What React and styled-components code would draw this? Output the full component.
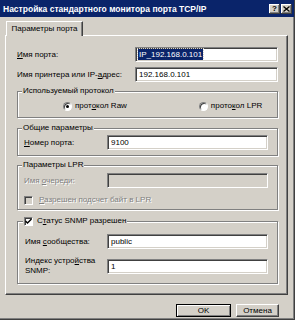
import styled, { createGlobalStyle } from "styled-components";

const GlobalStyle = createGlobalStyle`
  html, body {
    margin: 0;
    padding: 0;
    background: #d4d0c8;
  }
  body {
    font-family: "Liberation Sans", Arial, sans-serif;
    font-size: 8px;
    color: #000;
  }
`;

const Window = styled.div`
  width: 295px;
  height: 320px;
  box-sizing: border-box;
  background: #d4d0c8;
  border-right: 1px solid #404040;
  border-bottom: 1px solid #404040;
  box-shadow: inset -1px -1px 0 #808080;
  display: flex;
  flex-direction: column;
  overflow: hidden;
`;

const TitleBar = styled.div`
  height: 17px;
  flex: none;
  background: #0a246a;
  color: #fff;
  display: flex;
  align-items: center;
  padding: 0 2px 0 3px;
  font-weight: bold;
  font-size: 8.5px;
`;

const Title = styled.span`
  flex: 1;
  white-space: nowrap;
`;

const CaptionButton = styled.div`
  width: 11px;
  height: 10px;
  margin-left: 1px;
  background: #d4d0c8;
  box-shadow: inset -1px -1px 0 #404040, inset 1px 1px 0 #fff,
    inset -2px -2px 0 #808080;
  display: flex;
  align-items: center;
  justify-content: center;
  color: #000;
  font-size: 8px;
  font-weight: bold;
`;

const Body = styled.div`
  flex: 1;
  display: flex;
  flex-direction: column;
  padding: 4px 6px 0 5px;
`;

const TabStrip = styled.div`
  display: flex;
  height: 15px;
  position: relative;
  z-index: 1;
  margin-bottom: -1px;
`;

const Tab = styled.div`
  margin-left: 1px;
  width: 77px;
  box-sizing: border-box;
  background: #d4d0c8;
  border-top: 1px solid #fff;
  border-left: 1px solid #fff;
  border-right: 1px solid #404040;
  box-shadow: inset -1px 0 0 #808080;
  display: flex;
  align-items: center;
  justify-content: center;
  padding-bottom: 1px;
`;

const Panel = styled.div`
  height: 260px;
  box-sizing: border-box;
  border-top: 1px solid #fff;
  border-left: 1px solid #fff;
  border-right: 1px solid #404040;
  border-bottom: 1px solid #404040;
  box-shadow: inset -1px -1px 0 #808080;
  padding: 11px 9px 0 11px;
  display: flex;
  flex-direction: column;
`;

const FieldRow = styled.div`
  display: flex;
  align-items: center;
  margin-top: ${(p) => p.$gap || 0}px;
`;

const Label = styled.span`
  flex: ${(p) => (p.$width ? "none" : 1)};
  width: ${(p) => (p.$width ? `${p.$width}px` : "auto")};
  line-height: 10px;
  color: ${(p) => (p.$disabled ? "#808080" : "#000")};
  text-shadow: ${(p) => (p.$disabled ? "1px 1px 0 #fff" : "none")};
`;

const Key = styled.u`
  text-decoration: underline;
  text-underline-offset: 1px;
`;

const TextBox = styled.div`
  width: ${(p) => (p.$width ? `${p.$width}px` : "auto")};
  flex: ${(p) => (p.$width ? "none" : 1)};
  height: 15px;
  box-sizing: border-box;
  border: 1px solid;
  border-color: #808080 #fff #fff #808080;
  box-shadow: inset 1px 1px 0 #404040, inset -1px -1px 0 #d4d0c8;
  background: ${(p) => (p.$disabled ? "#d4d0c8" : "#fff")};
  padding: 0 2px 0 3px;
  display: flex;
  align-items: center;
  white-space: nowrap;
`;

const Selected = styled.span`
  background: #0a246a;
  color: #fff;
  outline: 1px dotted #d4d0c8;
  outline-offset: 0;
  padding: 0 1px;
  margin-left: -1px;
  line-height: 11px;
`;

const Group = styled.fieldset`
  margin: ${(p) => p.$gap}px 0 0 0;
  padding: 0;
  min-width: 0;
  border: 1px solid #808080;
  box-shadow: inset 1px 1px 0 #fff, 1px 1px 0 #fff;
`;

const Legend = styled.legend`
  margin-left: ${(p) => p.$indent || 4}px;
  padding: 0 1px;
  line-height: 10px;
  background: #d4d0c8;
  display: flex;
  align-items: center;
  gap: 4px;
`;

const GroupBody = styled.div`
  padding: ${(p) => p.$pad};
  display: flex;
  flex-direction: column;
`;

const RadioRow = styled.div`
  display: flex;
  align-items: center;
  height: 10px;
  padding-left: 45px;
`;

const RadioOption = styled.label`
  display: flex;
  align-items: center;
  gap: 3px;
  margin-left: ${(p) => p.$offset || 0}px;
  line-height: 10px;
`;

const RadioDot = styled.span`
  width: 9px;
  height: 9px;
  box-sizing: border-box;
  border-radius: 50%;
  border: 1px solid;
  border-color: #808080 #fff #fff #808080;
  box-shadow: inset 1px 1px 0 #404040;
  background: #fff;
  display: flex;
  align-items: center;
  justify-content: center;
  &::after {
    content: "";
    width: 3px;
    height: 3px;
    border-radius: 50%;
    background: ${(p) => (p.$checked ? "#000" : "transparent")};
  }
`;

const CheckRow = styled.label`
  display: flex;
  align-items: center;
  gap: ${(p) => p.$spacing || 6}px;
  margin-top: ${(p) => p.$gap || 0}px;
  line-height: 10px;
  color: ${(p) => (p.$disabled ? "#808080" : "#000")};
  text-shadow: ${(p) => (p.$disabled ? "1px 1px 0 #fff" : "none")};
`;

const CheckBox = styled.span`
  width: 9px;
  height: 9px;
  flex: none;
  box-sizing: border-box;
  border: 1px solid;
  border-color: #808080 #fff #fff #808080;
  box-shadow: inset 1px 1px 0 #404040;
  background: ${(p) => (p.$disabled ? "#d4d0c8" : "#fff")};
  display: flex;
  align-items: center;
  justify-content: center;
`;

const ButtonRow = styled.div`
  display: flex;
  justify-content: flex-end;
  gap: 5px;
  padding: 9px 9px 0 0;
`;

const Button = styled.div`
  width: ${(p) => p.$width}px;
  height: 13px;
  box-sizing: border-box;
  background: #d4d0c8;
  border: 1px solid ${(p) => (p.$default ? "#000" : "#d4d0c8")};
  border-color: ${(p) =>
    p.$default ? "#000" : "#fff #404040 #404040 #fff"};
  box-shadow: ${(p) =>
    p.$default
      ? "inset 1px 1px 0 #fff, inset -1px -1px 0 #808080"
      : "inset -1px -1px 0 #808080"};
  display: flex;
  align-items: center;
  justify-content: center;
`;

const Check = () => (
  <svg width="7" height="7" viewBox="0 0 7 7">
    <path d="M0.5 3 L2.5 5 L6.5 1" stroke="#000" strokeWidth="1.4" fill="none" />
  </svg>
);

const CloseGlyph = () => (
  <svg width="7" height="6" viewBox="0 0 7 6">
    <path d="M0.5 0.5 L6.5 5.5 M6.5 0.5 L0.5 5.5" stroke="#000" strokeWidth="1.3" />
  </svg>
);

export default function App() {
  return (
    <>
      <GlobalStyle />
      <Window>
        <TitleBar>
          <Title>Настройка стандартного монитора порта TCP/IP</Title>
          <CaptionButton>?</CaptionButton>
          <CaptionButton>
            <CloseGlyph />
          </CaptionButton>
        </TitleBar>
        <Body>
          <TabStrip>
            <Tab>Параметры порта</Tab>
          </TabStrip>
          <Panel>
            <FieldRow>
              <Label>
                <Key>И</Key>мя порта:
              </Label>
              <TextBox $width={143}>
                <Selected>IP_192.168.0.101</Selected>
              </TextBox>
            </FieldRow>
            <FieldRow $gap={5}>
              <Label>
                Имя принтера или IP-<Key>а</Key>дрес:
              </Label>
              <TextBox $width={143}>192.168.0.101</TextBox>
            </FieldRow>

            <Group $gap={4}>
              <Legend>Используемый протокол</Legend>
              <GroupBody $pad="5px 0 6px 0">
                <RadioRow>
                  <RadioOption>
                    <RadioDot $checked />
                    <span>
                      прот<Key>о</Key>кол Raw
                    </span>
                  </RadioOption>
                  <RadioOption $offset={72}>
                    <RadioDot />
                    <span>
                      прото<Key>к</Key>ол LPR
                    </span>
                  </RadioOption>
                </RadioRow>
              </GroupBody>
            </Group>

            <Group $gap={5}>
              <Legend>Общие параметры</Legend>
              <GroupBody $pad="2px 9px 5px 6px">
                <FieldRow>
                  <Label $width={83}>
                    <Key>Н</Key>омер порта:
                  </Label>
                  <TextBox>9100</TextBox>
                </FieldRow>
              </GroupBody>
            </Group>

            <Group $gap={4}>
              <Legend>Параметры LPR</Legend>
              <GroupBody $pad="3px 9px 4px 6px">
                <FieldRow>
                  <Label $width={83} $disabled>
                    Имя <Key>о</Key>череди:
                  </Label>
                  <TextBox $disabled />
                </FieldRow>
                <CheckRow $gap={7} $disabled>
                  <CheckBox $disabled />
                  <span>
                    <Key>Р</Key>азрешен подсчет байт в LPR
                  </span>
                </CheckRow>
              </GroupBody>
            </Group>

            <Group $gap={6}>
              <Legend $indent={5}>
                <CheckRow $spacing={4}>
                  <CheckBox>
                    <Check />
                  </CheckBox>
                  <span>
                    С<Key>т</Key>атус SNMP разрешен
                  </span>
                </CheckRow>
              </Legend>
              <GroupBody $pad="8px 9px 7px 7px">
                <FieldRow>
                  <Label $width={82}>
                    Имя <Key>с</Key>ообщества:
                  </Label>
                  <TextBox>public</TextBox>
                </FieldRow>
                <FieldRow $gap={7}>
                  <Label $width={82}>
                    Индекс устро<Key>й</Key>ства
                    <br />
                    SNMP:
                  </Label>
                  <TextBox>1</TextBox>
                </FieldRow>
              </GroupBody>
            </Group>
          </Panel>
          <ButtonRow>
            <Button $width={55} $default>
              OK
            </Button>
            <Button $width={43}>Отмена</Button>
          </ButtonRow>
        </Body>
      </Window>
    </>
  );
}
